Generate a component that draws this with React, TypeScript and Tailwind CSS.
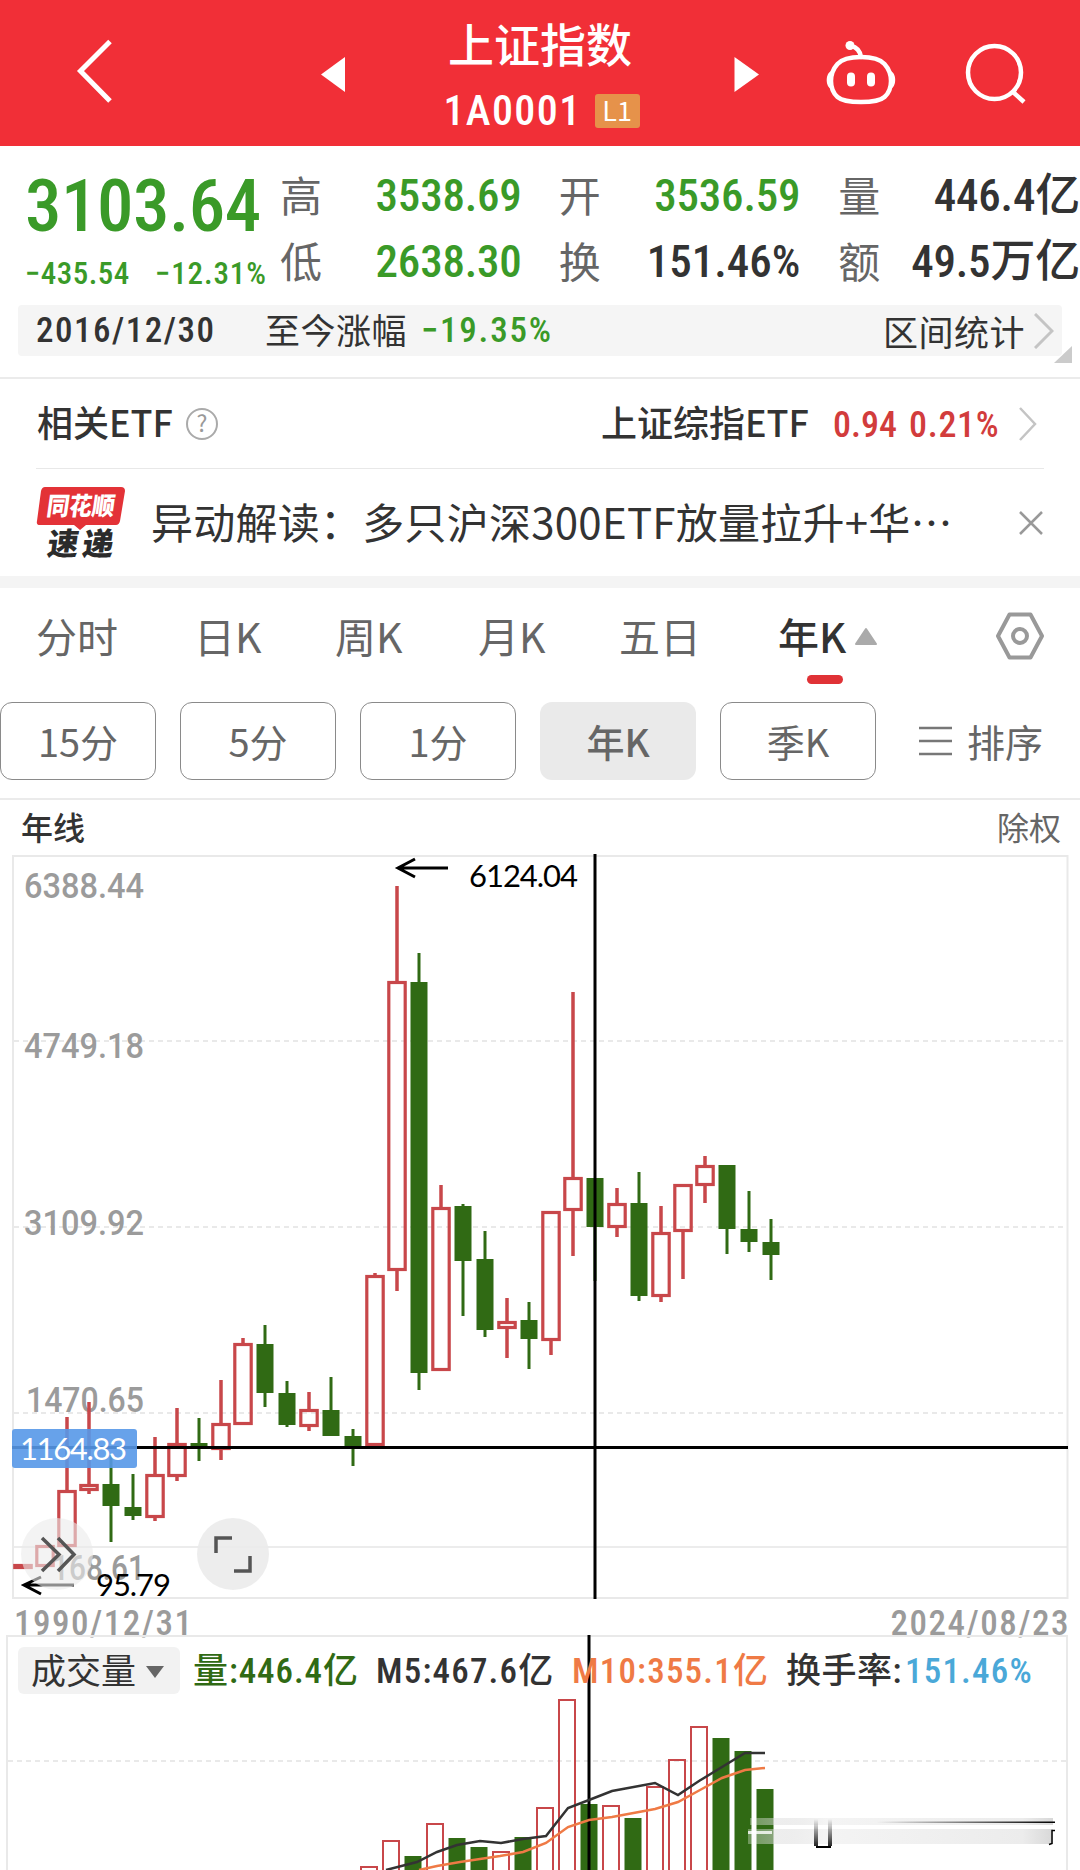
import React from 'react'

type Candle = {
    up: boolean
    high: number
    top: number
    bottom: number
    low: number
}

const RED = '#c8474a'
const GREEN = '#306a14'
const STEP = 22

const row = (up: number, high: number, top: number, bottom: number, low: number): Candle => ({
    up: up === 1,
    high,
    top,
    bottom,
    low,
})

// one candle per year, 1990 - 2024
const candles: Candle[] = [
    row(1, 1564, 1564, 1569, 1569),
    row(1, 1545, 1545, 1567, 1567),
    row(1, 1417, 1490, 1547, 1547),
    row(1, 1402, 1484, 1491, 1494),
    row(0, 1455, 1484, 1506, 1542),
    row(0, 1474, 1507, 1516, 1520),
    row(1, 1437, 1474, 1518, 1521),
    row(1, 1408, 1443, 1477, 1481),
    row(0, 1418, 1443, 1446, 1461),
    row(1, 1380, 1423, 1450, 1460),
    row(1, 1338, 1343, 1425, 1425),
    row(0, 1325, 1344, 1393, 1407),
    row(0, 1381, 1393, 1425, 1427),
    row(1, 1392, 1409, 1427, 1431),
    row(0, 1377, 1410, 1436, 1436),
    row(0, 1429, 1436, 1446, 1466),
    row(1, 1273, 1275, 1446, 1446),
    row(1, 886, 981, 1271, 1291),
    row(0, 953, 982, 1373, 1390),
    row(1, 1185, 1207, 1371, 1371),
    row(0, 1204, 1206, 1261, 1316),
    row(0, 1231, 1259, 1330, 1337),
    row(1, 1298, 1321, 1329, 1358),
    row(0, 1302, 1320, 1339, 1369),
    row(1, 1211, 1211, 1341, 1355),
    row(1, 992, 1177, 1211, 1256),
    row(0, 1178, 1178, 1227, 1281),
    row(1, 1188, 1203, 1228, 1237),
    row(0, 1172, 1203, 1296, 1301),
    row(1, 1206, 1232, 1297, 1302),
    row(1, 1184, 1184, 1232, 1279),
    row(1, 1156, 1165, 1186, 1203),
    row(0, 1165, 1165, 1229, 1254),
    row(0, 1191, 1229, 1242, 1252),
    row(0, 1219, 1242, 1255, 1280),
]

const volumes = [
    { up: true, top: 1866 },
    { up: true, top: 1840 },
    { up: false, top: 1856 },
    { up: true, top: 1823 },
    { up: false, top: 1838 },
    { up: false, top: 1847 },
    { up: true, top: 1851 },
    { up: false, top: 1837 },
    { up: true, top: 1807 },
    { up: true, top: 1699 },
    { up: false, top: 1804 },
    { up: true, top: 1805 },
    { up: false, top: 1818 },
    { up: true, top: 1786 },
    { up: true, top: 1759 },
    { up: true, top: 1726 },
    { up: false, top: 1738 },
    { up: false, top: 1751 },
    { up: false, top: 1789 },
]

const digits = "font-[Roboto,'Noto_Sans_CJK_SC',sans-serif] [font-stretch:86%]"

const Header = () => (
    <header className="flex h-[146px] w-full bg-[#f12f37] text-white">
        <svg className="h-[146px] w-[400px] shrink-0" viewBox="0 0 400 146" fill="none">
            <path d="M110 41.500 80.500 71 110 101" stroke="white" strokeWidth="5" />
            <path d="M321 74.500 345 57v35z" fill="white" />
        </svg>
        <div className="flex w-[280px] shrink-0 flex-col items-center pt-[17px]">
            <h1 className="text-[46px] leading-[50px] font-medium">上证指数</h1>
            <div className="mt-[18px] flex h-[52px] items-center gap-[13px] pl-[3px]">
                <span className={`text-[42px] leading-none tracking-[1.400px] ${digits} font-medium`}>1A0001</span>
                <span className="flex h-[34px] w-[45px] items-center justify-center rounded-[3px] bg-[#e6924a] pb-[3px] text-[27px] leading-none">
                    L1
                </span>
            </div>
        </div>
        <svg className="h-[146px] w-[400px] shrink-0" viewBox="680 0 400 146" fill="none">
            <path d="M759 74.500 734.500 57v35z" fill="white" />
            <g stroke="white" strokeWidth="4.500">
                <path d="M861 57c12 0 19 2 23.500 7s6.500 10 6.500 17-2 12-6.500 16-12 5-23.500 5-19-1-23.500-5-6.500-9-6.500-16 2-12 6.500-17 11.500-7 23.500-7z" />
                <path d="M861 57c-1-6-5-10-10-11" strokeLinecap="round" />
                <circle cx="994.500" cy="72.500" r="26.500" />
                <path d="m1013 92 11 10" />
            </g>
            <circle cx="850" cy="45.500" r="4.500" fill="white" />
            <path d="M832 71c-7 1-7 17 0 18zM890 71c7 1 7 17 0 18z" fill="white" />
            <rect x="847" y="72.500" width="8" height="14" rx="4" fill="white" />
            <rect x="867" y="72.500" width="8" height="14" rx="4" fill="white" />
        </svg>
    </header>
)

const Quote = () => (
    <section className="flex h-[159px] w-full pt-[27px] text-[#333]">
        <div className="w-[254px] shrink-0 pl-[25px] text-[#3a9a28]">
            <p className={`h-[68px] text-[73px] leading-[66px] tracking-[-0.500px] ${digits} font-medium`}>
                3103.64
            </p>
            <div
                className={`mt-[16px] flex h-[32px] items-center text-[31px] leading-none whitespace-nowrap ${digits} font-medium`}
            >
                <span className="w-[130px] shrink-0 tracking-[0.500px]">−435.54</span>
                <span className="tracking-[0.900px]">−12.31%</span>
            </div>
        </div>
        <div className="mt-[-12px] flex h-[132px] w-[826px] shrink-0 flex-col">
            <div className="flex h-[66px] items-center pt-[3px] text-[45px] leading-none">
                <span className="w-[64px] pb-[4px] pl-[26px] text-[42px] text-[#666]">高</span>
                <span className={`w-[204px] text-right tracking-[-0.200px] text-[#3a9a28] ${digits} font-medium`}>3538.69</span>
                <span className="w-[78px] pb-[4px] pl-[37px] text-[42px] text-[#666]">开</span>
                <span className={`w-[201px] text-right tracking-[-0.200px] text-[#3a9a28] ${digits} font-medium`}>3536.59</span>
                <span className="w-[78px] pb-[4px] pl-[38px] text-[42px] text-[#666]">量</span>
                <span className={`w-[202px] text-right tracking-[-0.200px] ${digits} font-medium`}>446.4亿</span>
            </div>
            <div className="flex h-[66px] items-center pt-[3px] text-[45px] leading-none">
                <span className="w-[64px] pb-[4px] pl-[26px] text-[42px] text-[#666]">低</span>
                <span className={`w-[204px] text-right tracking-[-0.200px] text-[#3a9a28] ${digits} font-medium`}>2638.30</span>
                <span className="w-[78px] pb-[4px] pl-[37px] text-[42px] text-[#666]">换</span>
                <span className={`w-[201px] text-right ${digits} font-medium`}>151.46%</span>
                <span className="w-[78px] pb-[4px] pl-[38px] text-[42px] text-[#666]">额</span>
                <span className={`w-[202px] text-right tracking-[-0.200px] ${digits} font-medium`}>49.5万亿</span>
            </div>
        </div>
    </section>
)

const RangeBar = () => (
    <section className="relative mb-[21px] ml-[18px] flex h-[51px] w-[1044px] items-center rounded bg-[#f5f5f5] text-[35px] leading-none text-[#333]">
        <span className={`w-[247px] pl-[18px] tracking-[1.500px] ${digits} font-medium`}>2016/12/30</span>
        <span className="w-[156px] pb-[4px] tracking-[0.500px]">至今涨幅</span>
        <span className={`tracking-[1.800px] text-[#3a9a28] ${digits} font-medium`}>−19.35%</span>
        <span className="ml-auto tracking-[0.500px]">区间统计</span>
        <svg className="mr-2 ml-[9px] h-[36px] w-[20px]" viewBox="0 0 20 36" fill="none">
            <path d="m1 1 17 17L1 35" stroke="#c4c4c4" strokeWidth="3" />
        </svg>
        <svg className="absolute top-[41px] left-[1036px] h-[17px] w-[18px]" viewBox="0 0 18 17">
            <path d="M18 0v17H0z" fill="#cbcbcb" />
        </svg>
    </section>
)

const EtfRow = () => (
    <section className="flex h-[91px] w-full items-center border-t-2 border-[#ebebeb] pl-[37px] text-[36px] leading-none text-[#333]">
        <span className="pb-[5px] font-medium">相关ETF</span>
        <span className="ml-[13px] flex h-[32px] w-[32px] items-center justify-center rounded-full border-2 border-[#aaa] pb-[3px] text-[23px] text-[#999]">
            ?
        </span>
        <span className="ml-auto pb-[5px] font-medium">上证综指ETF</span>
        <span className={`ml-[24px] w-[76px] text-[#d23c3c] ${digits} pt-[2px] font-medium`}>0.94</span>
        <span className={`w-[90px] tracking-[0.700px] text-[#d23c3c] ${digits} pt-[2px] font-medium`}>0.21%</span>
        <svg className="mr-[43px] ml-[20px] h-[34px] w-[18px]" viewBox="0 0 18 34" fill="none">
            <path d="m1 1 15 16L1 33" stroke="#c4c4c4" strokeWidth="2.500" />
        </svg>
    </section>
)

const News = () => (
    <section className="mx-[36px] flex h-[108px] items-center border-t border-[#e8e8e8] text-[#333]">
        <svg className="h-[76px] w-[90px] shrink-0 overflow-visible" viewBox="36 484 90 76">
            <path
                d="M45 486h76q4 0 4 4l-5 30q-1 4-4 4H86l-6 5-6-5H40q-4 0-3-4l4-30q1-4 4-4z"
                fill="#e33237"
            />
            <g
                fontFamily="'Noto Sans CJK SC', sans-serif"
                fontWeight="900"
                transform="skewX(-8)"
            >
                <text x="118" y="514.500" fontSize="25" textLength="68" lengthAdjust="spacingAndGlyphs" fill="white">
                    同花顺
                </text>
                <text x="124" y="554" fontSize="31" textLength="66" fill="#2b2b2b">
                    速递
                </text>
            </g>
        </svg>
        <p className="ml-[25px] w-[805px] shrink-0 pb-[4px] text-[42px] leading-none tracking-[0.250px] whitespace-nowrap">
            异动解读：多只沪深300ETF放量拉升+华…
        </p>
        <svg className="ml-auto h-[26px] w-[26px]" viewBox="0 0 26 26" fill="none">
            <path d="m2 2 22 22M24 2 2 24" stroke="#999" strokeWidth="2.500" />
        </svg>
    </section>
)

const Tabs = () => (
    <nav className="relative flex h-[126px] w-full items-center border-t-[12px] border-[#f4f4f4] pb-[18px] pl-[36px] text-[41px] leading-none text-[#666] [&>span]:pb-[2px]">
        <span className="w-[158px]">分时</span>
        <span className="w-[141px]">日K</span>
        <span className="w-[143px]">周K</span>
        <span className="w-[141px]">月K</span>
        <span className="w-[159px]">五日</span>
        <span className="font-medium text-[#333]">年K</span>
        <svg className="ml-2 h-[19px] w-[24px]" viewBox="0 0 24 19">
            <path d="M12 2 22 17H2z" fill="#aaa" stroke="#aaa" strokeWidth="2" strokeLinejoin="round" />
        </svg>
        <svg className="mr-[35px] ml-auto h-[50px] w-[50px]" viewBox="0 0 50 50" fill="none" stroke="#999">
            <path d="M14.500 3.500h21L47 25 35.500 46.500h-21L3 25z" strokeWidth="4" strokeLinejoin="round" />
            <circle cx="25" cy="25" r="7" strokeWidth="4" />
        </svg>
        <i className="absolute top-[87px] left-[807px] h-[9px] w-[36px] rounded-full bg-[#e03236]" />
    </nav>
)

const Periods = () => (
    <section className="flex h-[98px] w-full gap-6 border-b-2 border-[#ebebeb] text-[38px] leading-none text-[#666]">
        {['15分', '5分', '1分', '年K', '季K'].map((name) => (
            <button
                key={name}
                className={`flex h-[78px] w-[156px] items-center justify-center rounded-xl ${
                    name === '年K' ? 'bg-[#eaeaea] font-medium' : 'border border-[#8a8a8a]'
                }`}
            >
                {name}
            </button>
        ))}
        <div className="flex h-[78px] items-center pl-[19px]">
            <svg className="mr-[15px] h-[32px] w-[33px]" viewBox="0 0 33 32">
                <path d="M0 3h33M0 16h33M0 29h33" stroke="#777" strokeWidth="2.500" />
            </svg>
            排序
        </div>
    </section>
)

const axis = [
    { text: '6388.44', x: 24, y: 898, w: 120 },
    { text: '4749.18', x: 24, y: 1058, w: 120 },
    { text: '3109.92', x: 24, y: 1235, w: 120 },
    { text: '1470.65', x: 26, y: 1412, w: 118 },
    { text: '168.61', x: 52, y: 1580, w: 93 },
]

const PriceChart = () => (
    <svg className="block h-[749px] w-full" viewBox="0 850 1080 749" fill="none">
        <rect x="13" y="856" width="1054.500" height="742" stroke="#e9e9e9" strokeWidth="2" />
        <path
            d="M14 1041H1067M14 1227H1067M14 1413H1067"
            stroke="#e9e9e9"
            strokeWidth="2"
            strokeDasharray="5 4"
        />
        <path d="M14 1547H1067" stroke="#e6e6e6" strokeWidth="1.500" />
        <g fontFamily="Roboto, sans-serif" fontSize="35" fontWeight="500" fill="#9b9b9b">
            {axis.map((a) => (
                <text key={a.text} x={a.x} y={a.y} textLength={a.w} lengthAdjust="spacingAndGlyphs">
                    {a.text}
                </text>
            ))}
        </g>
        {candles.map((c, i) => {
            const x = 23 + i * STEP
            return c.up ? (
                <g key={i} stroke={RED} strokeWidth="3.200">
                    <path d={`M${x} ${c.high}V${c.top}M${x} ${c.bottom}V${c.low}`} strokeWidth="3.500" />
                    <rect
                        x={x - 8.2}
                        y={c.top + 1.5}
                        width="16.400"
                        height={Math.max(c.bottom - c.top - 3, 1)}
                    />
                </g>
            ) : (
                <g key={i} fill={GREEN}>
                    <rect x={x - 1.5} y={c.high} width="3" height={c.low - c.high} />
                    <rect x={x - 8.5} y={c.top} width="17" height={c.bottom - c.top} />
                </g>
            )
        })}
        <path d="M12 1447.500H1068" stroke="black" strokeWidth="3" />
        <path d="M595 854V1599" stroke="black" strokeWidth="3" />
        <g stroke="black" strokeWidth="3">
            <path d="M448 868H398M415 859l-17 9 17 9" />
            <path d="M74 1585H24M41 1577l-17 8 17 9" />
        </g>
        <rect x="12" y="1429" width="125" height="39" rx="3" fill="#5698e8" fillOpacity="0.900" />
        <g fontFamily="Lato, sans-serif" fontSize="31">
            <text x="469" y="887" fill="black" textLength="109">
                6124.04
            </text>
            <text x="96" y="1596" fill="black" textLength="75">
                95.79
            </text>
            <text x="20" y="1460" fill="white" textLength="107">
                1164.83
            </text>
        </g>
        <circle cx="57" cy="1554" r="36" fill="#ebebeb" fillOpacity="0.600" />
        <circle cx="233" cy="1554" r="36" fill="#ebebeb" fillOpacity="0.900" />
        <g stroke="#555" strokeWidth="3.500">
            <path d="m42 1538 17 16.500L42 1571M58 1538l16 16.500-16 16.500" />
            <path d="M216 1553v-15h16M250 1556v15h-16" />
        </g>
    </svg>
)

const VolumeChart = () => (
    <svg className="block h-[235px] w-full" viewBox="0 1635 1080 235" fill="none">
        <defs>
            <linearGradient id="fade" x1="0" x2="1" y1="0" y2="0">
                <stop offset="0" stopColor="#fff" stopOpacity="0.300" />
                <stop offset="0.080" stopColor="#ddd" stopOpacity="0.500" />
                <stop offset="0.250" stopColor="#f4f4f4" />
                <stop offset="0.900" stopColor="#ececec" />
                <stop offset="1" stopColor="#d8d8d8" />
            </linearGradient>
            <linearGradient id="shade" x1="0" x2="0" y1="0" y2="1">
                <stop offset="0" stopColor="#000" stopOpacity="0" />
                <stop offset="1" stopColor="#000" stopOpacity="0.850" />
            </linearGradient>
            <linearGradient id="line" x1="0" x2="1" y1="0" y2="0">
                <stop offset="0.300" stopColor="#000" stopOpacity="0" />
                <stop offset="1" stopColor="#000" />
            </linearGradient>
        </defs>
        <path d="M7 1870V1636H1067V1870" stroke="#e9e9e9" strokeWidth="2" />
        <path d="M8 1761H1067" stroke="#e9e9e9" strokeWidth="2" strokeDasharray="5 4" />
        {volumes.map((v, i) => {
            const x = 369 + i * STEP
            return v.up ? (
                <rect
                    key={i}
                    x={x - 8}
                    y={v.top + 1}
                    width="16"
                    height="200"
                    stroke={RED}
                    strokeWidth="2"
                />
            ) : (
                <rect key={i} x={x - 8.5} y={v.top} width="17" height="200" fill={GREEN} />
            )
        })}
        <path d="M589 1635V1870" stroke="black" strokeWidth="3" />
        <polyline
            points="386,1870 417,1862 437,1852 457,1845 480,1841 501,1843 523,1839 546,1836 568,1808 589,1800 612,1791 655,1783 678,1795 699,1781 722,1767 745,1753 765,1753"
            stroke="#333"
            strokeWidth="2.500"
        />
        <polyline
            points="419,1870 437,1866 460,1862 500,1856 523,1852 546,1843 568,1827 589,1820 612,1817 655,1809 678,1802 700,1790 722,1778 745,1770 765,1768"
            stroke="#ef7a45"
            strokeWidth="2.500"
        />
        <rect x="750" y="1818" width="303" height="7" fill="url(#fade)" />
        <rect x="748" y="1829" width="305" height="15" fill="url(#fade)" />
        <rect x="748" y="1831" width="24" height="3" fill="white" fillOpacity="0.800" />
        <rect x="800" y="1821.500" width="255" height="1.500" fill="url(#line)" />
        <rect x="814" y="1819" width="4" height="27" fill="url(#shade)" />
        <rect x="828" y="1819" width="4" height="27" fill="url(#shade)" />
        <path d="M816 1847H831" stroke="black" strokeWidth="2" />
        <path d="M1055 1830.500h-3v13l-3 1" stroke="black" strokeWidth="1.500" />
    </svg>
)

const Charts = () => (
    <section className="w-full">
        <div className="flex h-[50px] items-center justify-between pt-[2px] pr-[19px] pl-[21px] text-[32px] leading-none">
            <span className="font-medium text-[#333]">年线</span>
            <span className="text-[#666]">除权</span>
        </div>
        <PriceChart />
        <div className="flex h-[36px] items-center justify-between pt-[13px] pr-[10px] pl-[14px] text-[35px] leading-none tracking-[1.500px] text-[#9b9b9b]">
            <span className={`${digits} font-medium`}>1990/12/31</span>
            <span className={`${digits} font-medium`}>2024/08/23</span>
        </div>
        <div className="relative">
            <div
                className={`absolute top-[12px] left-[18px] flex h-[47px] items-center text-[35px] leading-none whitespace-nowrap [&>span]:pt-[2px] ${digits} font-medium`}
            >
                <button className="mr-[13px] flex h-[47px] w-[162px] items-center rounded-md bg-[#f2f2f2] pt-[3px] pl-[13px] font-normal text-[#333]">
                    成交量
                    <svg className="ml-[9px] h-[14px] w-[20px]" viewBox="0 0 20 14">
                        <path d="M1 1h18l-9 12z" fill="#666" />
                    </svg>
                </button>
                <span className="w-[183px] tracking-[0.900px] text-[#306a14]">量:446.4亿</span>
                <span className="w-[196px] tracking-[1.200px] text-[#333]">M5:467.6亿</span>
                <span className="w-[214px] tracking-[1.200px] text-[#ef7a45]">M10:355.1亿</span>
                <span className="w-[119px] tracking-[0.500px] text-[#333]">换手率:</span>
                <span className="tracking-[1.200px] text-[#4aa8d8]">151.46%</span>
            </div>
            <VolumeChart />
        </div>
    </section>
)

const App = () => {
    return (
        <main className="h-[1870px] w-[1080px] overflow-hidden bg-white font-['Noto_Sans_CJK_SC',sans-serif]">
            <Header />
            <Quote />
            <RangeBar />
            <EtfRow />
            <News />
            <Tabs />
            <Periods />
            <Charts />
        </main>
    )
}

export default App
